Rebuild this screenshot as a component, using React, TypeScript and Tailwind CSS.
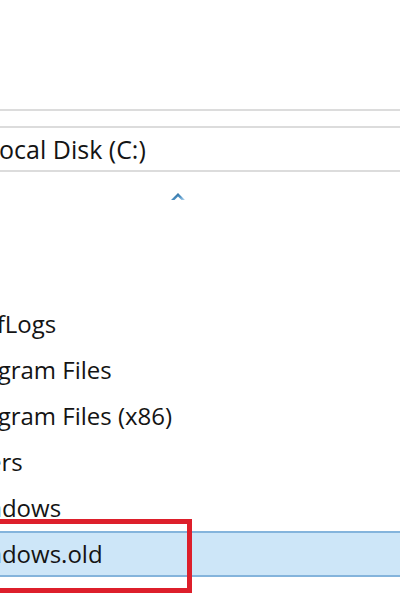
import React from 'react';

// Explorer detail rows, cropped on the left like the screenshot
const rows: { name: string; selected?: boolean }[] = [
  { name: 'PerfLogs' },
  { name: 'Program Files' },
  { name: 'Program Files (x86)' },
  { name: 'Users' },
  { name: 'Windows' },
  { name: 'Windows.old', selected: true },
];

function SortCaret() {
  return (
    <svg width="16" height="10" viewBox="0 0 16 10" className="ml-[170px]">
      <defs>
        <linearGradient id="caret" x1="0" y1="0" x2="1" y2="1">
          <stop offset="0" stopColor="#1d5a88" />
          <stop offset="0.6" stopColor="#4f93c6" />
          <stop offset="1" stopColor="#b7d8ef" />
        </linearGradient>
      </defs>
      <path d="M1 9 L8 2 L15 9 L11.5 9 L8 5.5 L4.5 9 Z" fill="url(#caret)" />
    </svg>
  );
}

export default function App() {
  return (
    <div
      className="relative w-[400px] h-[600px] overflow-hidden bg-white text-[#141414]"
      style={{ fontFamily: '"Open Sans", "Noto Sans", sans-serif' }}
    >
      <div className="h-[109px]" />
      <div className="h-[2px] bg-[#dcdcdc]" />
      <div className="h-[15px]" />

      {/* address bar */}
      <div className="h-[46px] border-y-2 border-[#dcdcdc] flex items-center">
        <span className="-ml-[14px] text-[25px] leading-none whitespace-nowrap">Local Disk (C:)</span>
      </div>

      <div className="h-[19px]" />
      <SortCaret />
      <div className="h-[100px]" />

      {/* file list */}
      <div className="flex flex-col">
        {rows.map((r) => (
          <div
            key={r.name}
            className={
              r.selected
                ? 'h-[46px] flex items-center bg-[#cde6f8] border-y-2 border-[#84b4dc]'
                : 'h-[46px] flex items-center border-y-2 border-transparent'
            }
          >
            <span className="-ml-[41px] text-[24px] leading-none whitespace-nowrap">{r.name}</span>
          </div>
        ))}
      </div>

      {/* red annotation frame */}
      <div className="absolute left-[-10px] top-[519px] w-[202px] h-[74px] border-[5px] border-[#dd1f2b]" />
    </div>
  );
}
